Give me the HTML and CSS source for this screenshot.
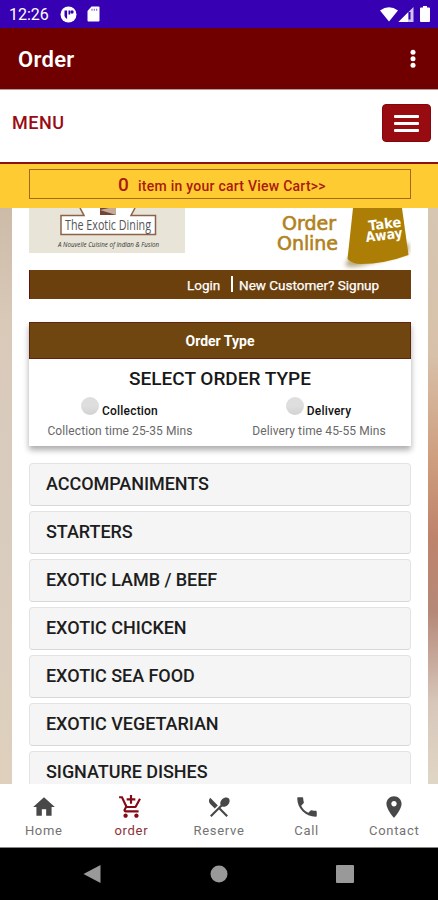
FILE: index.html
```html
<!DOCTYPE html>
<html lang="en">
<head>
<meta charset="utf-8">
<title>Order</title>
<link rel="stylesheet" href="styles.css">
</head>
<body>
<div class="screen">
  <div class="status">
    <span class="clock">12:26</span>
    <svg class="st-a" width="17" height="17" viewBox="0 0 17 17"><circle cx="8.500" cy="8.500" r="8" fill="#fff"/><path d="M4.500 4.500h2.600v8.500a5 5 0 0 1-2.600-3zM8.500 4.500h1.700v4H8.500z" fill="#3700b3"/><circle cx="12" cy="6" r="1.700" fill="#3700b3"/></svg>
    <svg class="st-b" width="13" height="16" viewBox="0 0 13 16"><path d="M4.500.5h7a1 1 0 0 1 1 1v13a1 1 0 0 1-1 1h-10a1 1 0 0 1-1-1V5z" fill="#fff"/><path d="M5 2.800v2M7.300 2.800v2M9.600 2.800v2" stroke="#8c70d8" stroke-width="1.200"/></svg>
    <span class="grow"></span>
    <svg width="18" height="15" viewBox="0 0 18 15"><path d="M0 3.500Q9-3 18 3.500L9 14.500z" fill="#fff"/></svg>
    <svg class="st-c" width="16" height="15" viewBox="0 0 16 15"><path d="M15.500 0v15H.5z" fill="#cfc4f0"/><path d="M10 5.500V15H.5z" fill="#fff"/><path d="M11.500 5v7.500" stroke="#3700b3" stroke-width="2"/></svg>
    <svg class="st-d" width="10" height="16" viewBox="0 0 10 16"><path d="M3 0h4v1.500h2a1 1 0 0 1 1 1V15a1 1 0 0 1-1 1H1a1 1 0 0 1-1-1V2.500a1 1 0 0 1 1-1h2z" fill="#fff"/></svg>
  </div>
  <header class="appbar">
    <h1>Order</h1>
    <svg width="6" height="20" viewBox="0 0 6 20" fill="#fff"><circle cx="3" cy="3.200" r="2.500"/><circle cx="3" cy="9.700" r="2.500"/><circle cx="3" cy="16.200" r="2.500"/></svg>
  </header>
  <div class="menubar">
    <span class="menu-title">MENU</span>
    <button class="burger"><i></i><i></i><i></i></button>
  </div>
  <div class="cartbar"><div class="cartbox"><b>0</b><span>item in your cart View Cart&gt;&gt;</span></div></div>
  <main class="backdrop">
    <div class="page">
      <div class="banner">
        <svg width="156" height="45" viewBox="0 0 156 45">
          <rect width="156" height="45" fill="#e8e5d8"/>
          <path d="M52 0l4 7H32v20h95V7h-25l4-7z" fill="#fff"/>
          <path d="M51 0l4 7.500H32v19h94.500v-19H102l4-7.500" fill="none" stroke="#8b6348" stroke-width="1.500"/>
          <path d="M71 0h16v7H71z" fill="#704634"/><path d="M71 2l9-2h7v7z" fill="#c5aa96"/>
          <text class="brand" x="36" y="22" textLength="86" lengthAdjust="spacingAndGlyphs">The Exotic Dining</text>
          <text class="tagline" x="29" y="39" textLength="101" lengthAdjust="spacingAndGlyphs">A Nouvelle Cuisine of Indian &amp; Fusion</text>
        </svg>
        <svg class="takeaway" width="136" height="62" viewBox="0 0 136 62">
          <defs><filter id="soft" x="-20%" y="-20%" width="140%" height="140%"><feGaussianBlur stdDeviation="2"/></filter></defs>
          <text class="oo" x="7" y="22" textLength="54">Order</text>
          <text class="oo" x="2" y="42" textLength="61">Online</text>
          <path d="M76 46l58-11v10L90 57q-16 4-20 0z" fill="#9d8a55" opacity=".7" filter="url(#soft)"/>
          <path d="M78 0h49l6.500 47q-24 9-48 9-8 0-13-5z" fill="#ad7e05"/>
          <g class="ta" transform="rotate(-7 108 22)"><text x="94" y="21" textLength="33" lengthAdjust="spacingAndGlyphs">Take</text><text x="90" y="32" textLength="37" lengthAdjust="spacingAndGlyphs">Away</text></g>
        </svg>
      </div>
      <div class="login"><span class="lg">Login</span><i></i><span class="nc">New Customer? Signup</span></div>
      <section class="card">
        <div class="card-head">Order Type</div>
        <h2>SELECT ORDER TYPE</h2>
        <div class="options">
          <div class="option"><label><i></i><b>Collection</b></label><span>Collection time 25-35 Mins</span></div>
          <div class="option"><label><i></i><b>Delivery</b></label><span>Delivery time 45-55 Mins</span></div>
        </div>
      </section>
      <ul class="cats">
        <li>ACCOMPANIMENTS</li><li>STARTERS</li><li>EXOTIC LAMB / BEEF</li><li>EXOTIC CHICKEN</li><li>EXOTIC SEA FOOD</li><li>EXOTIC VEGETARIAN</li><li>SIGNATURE DISHES</li>
      </ul>
    </div>
  </main>
  <nav class="tabs">
    <a><svg viewBox="0 0 24 24"><path d="M10 20v-6h4v6h5v-8h3L12 3 2 12h3v8z"/></svg>Home</a>
    <a class="on"><svg viewBox="0 0 24 24"><path d="M11 9h2V6h3V4h-3V1h-2v3H8v2h3v3zm-4 9c-1.100 0-1.990.9-1.990 2S5.900 22 7 22s2-.9 2-2-.9-2-2-2zm10 0c-1.100 0-1.990.9-1.990 2s.89 2 1.990 2 2-.9 2-2-.9-2-2-2zm-9.830-3.250l.03-.12.9-1.630h7.450c.75 0 1.410-.41 1.750-1.030l3.860-7.010L19.420 4h-.01l-1.100 2-2.760 5H8.530l-.13-.27L6.160 6l-.95-2-.94-2H1v2h2l3.600 7.590-1.350 2.450c-.16.28-.25.61-.25.96 0 1.100.9 2 2 2h12v-2H7.420c-.13 0-.25-.11-.25-.25z"/></svg>order</a>
    <a><svg viewBox="0 0 24 24"><path d="M8.100 13.340l2.830-2.830L3.910 3.500c-1.560 1.560-1.560 4.090 0 5.660l4.190 4.180zm6.780-1.810c1.530.71 3.680.21 5.270-1.380 1.910-1.910 2.280-4.650.81-6.120-1.460-1.460-4.200-1.100-6.120.81-1.590 1.590-2.090 3.740-1.380 5.270L3.700 19.870l1.410 1.410L12 14.410l6.880 6.880 1.410-1.410L13.410 13l1.470-1.470z"/></svg>Reserve</a>
    <a><svg viewBox="0 0 24 24"><path d="M6.620 10.790c1.440 2.830 3.760 5.140 6.590 6.590l2.200-2.200c.27-.27.67-.36 1.020-.24 1.120.37 2.330.57 3.570.57.55 0 1 .45 1 1V20c0 .55-.45 1-1 1-9.390 0-17-7.610-17-17 0-.55.45-1 1-1h3.500c.55 0 1 .45 1 1 0 1.250.2 2.450.57 3.570.11.35.03.74-.25 1.020l-2.200 2.200z"/></svg>Call</a>
    <a><svg viewBox="0 0 24 24"><path d="M12 2C8.130 2 5 5.130 5 9c0 5.250 7 13 7 13s7-7.750 7-13c0-3.870-3.130-7-7-7zm0 9.500c-1.380 0-2.500-1.120-2.500-2.500s1.120-2.500 2.500-2.500 2.500 1.120 2.500 2.500-1.120 2.500-2.500 2.500z"/></svg>Contact</a>
  </nav>
  <div class="sysnav">
    <svg width="18" height="20" viewBox="0 0 18 20"><path d="M17.500 1v18L.5 10z"/></svg>
    <svg width="18" height="18" viewBox="0 0 18 18"><circle cx="9" cy="9" r="8.500"/></svg>
    <svg width="18" height="18" viewBox="0 0 18 18"><rect width="18" height="18" rx="1"/></svg>
  </div>
</div>
</body>
</html>
```
FILE: styles.css
```css
* { box-sizing: border-box; }
body { margin: 0; font-family: Roboto, "Liberation Sans", sans-serif; }
.screen { width: 438px; height: 900px; display: flex; flex-direction: column; overflow: hidden; background: #fff; }
.screen > * { flex: none; }
.status { height: 28px; background: #3700b3; display: flex; align-items: center; padding: 0 8px 0 9px; color: #fff; }
.clock { font-size: 16px; width: 51px; }
.st-b { margin-left: 10px; }
.grow { flex: 1; }
.st-d { margin-left: 6px; }
.appbar { height: 62px; background: #700000; border-bottom: 1px solid #b79a96; display: flex; align-items: center; justify-content: space-between; padding: 1px 22px 0 18px; }
.appbar h1 { margin: 0; font-size: 22px; font-weight: 600; letter-spacing: .3px; color: #fff; }
.menubar { height: 74px; border-bottom: 2px solid #8b1010; display: flex; align-items: center; justify-content: space-between; padding: 0 7px 6px 12px; }
.menu-title { font-size: 18px; font-weight: 500; color: #980b13; letter-spacing: .5px; margin-top: -2px; }
.burger { width: 49px; height: 38px; border: 1px solid #86050c; border-radius: 4px; background: #980b10; padding: 0; display: flex; flex-direction: column; align-items: center; justify-content: center; gap: 4px; }
.burger i { width: 25px; height: 3px; border-radius: 1px; background: #fff; }
.cartbar { height: 44px; background: #ffcb32; padding: 5px 27px 0 29px; }
.cartbox { height: 30px; border: 1px solid #a06b16; display: flex; align-items: center; padding-left: 88px; color: #a91a0c; }
.cartbox b { font-size: 19px; font-weight: 500; width: 20px; }
.cartbox span { font-size: 14px; font-weight: 500; padding-top: 3px; letter-spacing: .25px; }
.backdrop { height: 576px; overflow: hidden; padding: 0 10px 0 12px; background: linear-gradient(#cdbba8, #d9c9b9 20%, #d8ccbf 55%, #dfd0bd) 0 0 / 12px 100% no-repeat, linear-gradient(#d6c6b2, #d8c1aa 25%, #cf9f80 43%, #bf836b 57%, #b58878 70%, #d7c7ba 86%, #e0d6c6) 100% 0 / 10px 100% no-repeat; }
.page { background: #fff; height: 600px; padding: 0 17px; }
.banner { height: 62px; display: flex; justify-content: space-between; }
.brand { font: 14px "Open Sans", sans-serif; fill: #555; }
.tagline { font: italic 6.5px "Open Sans", sans-serif; fill: #333; }
.oo { font: 19px "DejaVu Sans", sans-serif; fill: #b08220; stroke: #b08220; stroke-width: .6px; }
.ta { font: bold 14px "DejaVu Sans", sans-serif; fill: #fff; }
.login { height: 29px; background: #6b400c; border-left: 1px solid #641010; color: #fff; font-size: 13.5px; display: flex; align-items: center; padding-left: 157px; }
.lg { width: 44px; }
.login i { width: 2px; height: 16px; background: #fff; margin: -1px 6px 0 0; }
.login span { white-space: nowrap; -webkit-text-stroke: .25px #fff; }
.card { margin-top: 23px; height: 124px; background: #fff; box-shadow: 0 4px 6px rgba(0,0,0,.33); }
.card-head { height: 37px; background: #6f4610; border: 1px solid #63250d; color: #fff; font-size: 14px; font-weight: 700; text-align: center; line-height: 36px; }
.card h2 { margin: 9px 0 0; height: 22px; line-height: 22px; font-size: 19px; font-weight: 500; color: #181818; text-align: center; }
.options { display: flex; padding: 6px 0 0; justify-content: space-between; }
.option { width: 182px; display: flex; flex-direction: column; align-items: center; }
.option:last-child { width: 184px; }
.option label { display: flex; height: 22px; margin-left: -1px; }
.option i { width: 18px; height: 18px; border-radius: 50%; background: linear-gradient(#dedede 50%, #d2d2d2); margin: 1px 3px 0 0; }
.option b { font-size: 12px; font-weight: 500; letter-spacing: .2px; line-height: 14px; padding-top: 8px; color: #111; }
.option span { font-size: 12px; line-height: 14px; color: #686868; padding-top: 6px; letter-spacing: .1px; }
.cats { list-style: none; margin: 17px 0 0; padding: 0; display: flex; flex-direction: column; gap: 5px; }
.cats li { height: 43px; border: 1px solid #e3e3e5; border-bottom-color: #d8d8d8; border-radius: 4px; background: #f5f5f5; font-size: 18px; font-weight: 500; letter-spacing: -.05px; color: #1d1d1d; padding-left: 16px; line-height: 39px; }
.tabs { height: 64px; background: #fff; border-bottom: 1px solid #888; display: grid; grid-template-columns: repeat(5, 1fr); }
.tabs a { display: flex; flex-direction: column; align-items: center; padding-top: 10px; font-size: 13px; line-height: 16px; letter-spacing: .7px; color: #737373; }
.tabs svg { width: 26px; height: 26px; fill: #484848; margin-bottom: 3px; }
.tabs .on { color: #8c3038; }
.tabs .on svg { fill: #820b14; }
.sysnav { height: 52px; background: #000; display: flex; align-items: center; justify-content: space-between; padding: 0 84px 0 83px; }
.sysnav svg { fill: #999; }
```
